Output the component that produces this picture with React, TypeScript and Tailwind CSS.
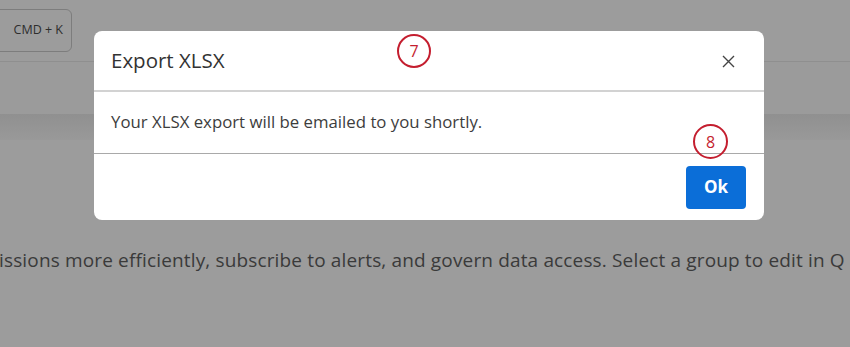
export default function App() {
    return (
        <div className="relative w-[850px] h-[347px] overflow-hidden bg-[#9c9c9c]" style={{ fontFamily: '"Open Sans", "Liberation Sans", sans-serif' }}>
            {/* page behind the overlay */}
            <div className="h-[62px] flex items-start pt-[9px] border-b border-[#8f8f8f]">
                <div className="-ml-[10px] w-[82px] h-[43px] flex items-center justify-end pr-[8px] rounded-md border border-[#7d7d7d] text-[12.5px] text-[#2e2e2e]">
                    CMD + K
                </div>
            </div>
            <div className="h-[52px] bg-[#9b9b9b]" />
            <div className="h-[26px] bg-gradient-to-b from-[#909090] to-[#999999]" />
            <div className="pt-[106px] -ml-[1px] whitespace-nowrap text-[19px] tracking-[0.15px] text-[#3a3a3a]">
                issions more efficiently, subscribe to alerts, and govern data access. Select a group to edit in Q
            </div>

            {/* modal */}
            <div className="absolute left-[94px] top-[31px] w-[670px] h-[189px] bg-white rounded-lg flex flex-col">
                <div className="h-[61px] flex items-center justify-between pl-[17px] pr-[29px] border-b-2 border-[#d2d2d2]">
                    <span className="text-[20.5px] text-[#333333]">Export XLSX</span>
                    <svg width="13" height="13" viewBox="0 0 13 13" className="mt-[1px]">
                        <path d="M1 1 L12 12 M12 1 L1 12" stroke="#444" strokeWidth="1.4" />
                    </svg>
                </div>
                <div className="h-[62px] flex items-center pl-[17px] pb-[1px] border-b border-[#a9a9a9]">
                    <span className="text-[16.8px] text-[#3d3d3d]">Your XLSX export will be emailed to you shortly.</span>
                </div>
                <div className="flex-1 flex items-center justify-end pr-[18px]">
                    <button className="w-[60px] h-[43px] rounded-[4px] bg-[#0b6ed8] text-white text-[17px] font-bold">
                        Ok
                    </button>
                </div>
            </div>

            {/* annotations */}
            <div className="absolute left-[397px] top-[34px] w-[34px] h-[34px] rounded-full border-2 border-[#c41e2f] flex items-center justify-center text-[16px] text-[#c41e2f]">
                7
            </div>
            <div className="absolute left-[693px] top-[124px] w-[35px] h-[35px] rounded-full border-2 border-[#c41e2f] flex items-center justify-center text-[16px] text-[#c41e2f]">
                8
            </div>
        </div>
    );
}
